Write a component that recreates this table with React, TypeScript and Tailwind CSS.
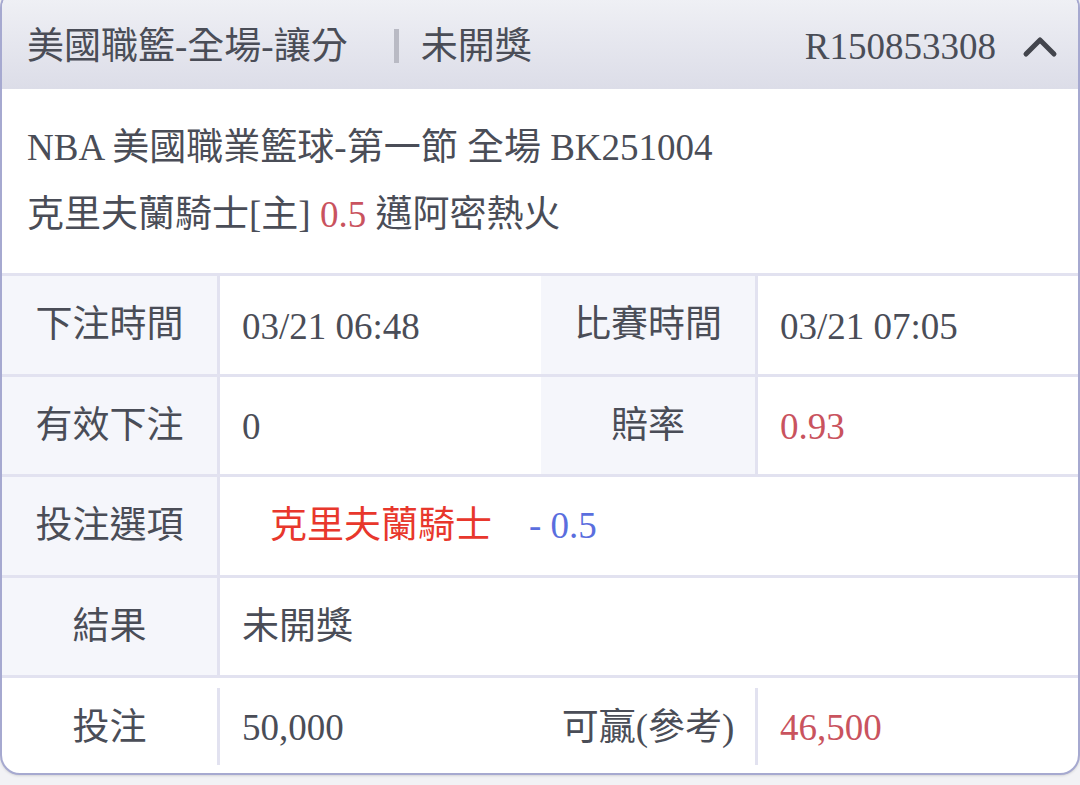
import React from "react";

const FONT = "font-['Liberation_Serif','Noto_Sans_CJK_TC',serif]";

function Chevron() {
  return (
    <svg width="36" height="26" viewBox="0 0 36 26" className="shrink-0">
      <polyline
        points="4,21 18,7 32,21"
        fill="none"
        stroke="#43454d"
        strokeWidth="5"
        strokeLinecap="round"
        strokeLinejoin="round"
      />
    </svg>
  );
}

function Label({ children, plain }: { children: React.ReactNode; plain?: boolean }) {
  return (
    <div
      className={`h-full flex items-center justify-center ${plain ? "" : "bg-[#f5f6fb]"}`}
    >
      {children}
    </div>
  );
}

function VDivider({ short }: { short?: boolean }) {
  if (short) return <div className="w-[3px] h-[77px] mt-[-2px] bg-[#e2e2f0] shrink-0" />;
  return <div className="w-[3px] h-full bg-[#e2e2f0] shrink-0" />;
}

export default function App() {
  return (
    <div className={`min-h-screen h-[785px] overflow-hidden bg-[#f2f2f5] ${FONT} text-[#4a4d57]`}>
      <div className="mt-[-12px] w-[1080px] h-[787px] rounded-[20px] border-2 border-[#a6a9d0] bg-white overflow-hidden flex flex-col shadow-sm">
        {/* header */}
        <div className="h-[99px] shrink-0 pt-[13px] pl-[25px] pr-[20px] flex items-center bg-gradient-to-b from-[#f1f2f6] to-[#dcdde8]">
          <span className="text-[37px] leading-none">美國職籃-全場-讓分</span>
          <span className="ml-[46px] w-[5px] h-[34px] bg-[#b9bac4]" />
          <span className="ml-[22px] text-[37px] leading-none">未開獎</span>
          <span className="ml-auto text-[37px] leading-none">R150853308</span>
          <span className="ml-[26px]">
            <Chevron />
          </span>
        </div>

        {/* match info */}
        <div className="h-[184px] shrink-0 pl-[25px] flex flex-col justify-center text-[37px] leading-[67px]">
          <div>NBA 美國職業籃球-第一節 全場 BK251004</div>
          <div>
            克里夫蘭騎士[主] <span className="text-[#c9535e]">0.5</span> 邁阿密熱火
          </div>
        </div>

        {/* table */}
        <div className="flex flex-col text-[37px] leading-none">
          <div className="h-[100.5px] border-t-[3px] border-[#e2e2f0] flex">
            <div className="w-[215px] shrink-0"><Label>下注時間</Label></div>
            <VDivider />
            <div className="w-[321px] shrink-0 flex items-center pl-[22px] pt-[3px]">03/21 06:48</div>
            <div className="w-[214px] shrink-0"><Label>比賽時間</Label></div>
            <VDivider />
            <div className="flex-1 flex items-center pl-[22px] pt-[3px]">03/21 07:05</div>
          </div>

          <div className="h-[100.5px] border-t-[3px] border-[#e2e2f0] flex">
            <div className="w-[215px] shrink-0"><Label>有效下注</Label></div>
            <VDivider />
            <div className="w-[321px] shrink-0 flex items-center pl-[22px] pt-[3px]">0</div>
            <div className="w-[214px] shrink-0"><Label>賠率</Label></div>
            <VDivider />
            <div className="flex-1 flex items-center pl-[22px] pt-[3px] text-[#c9535e]">0.93</div>
          </div>

          <div className="h-[100.5px] border-t-[3px] border-[#e2e2f0] flex">
            <div className="w-[215px] shrink-0"><Label>投注選項</Label></div>
            <VDivider />
            <div className="flex-1 flex items-center pl-[50px]">
              <span className="text-[#e8372c]">克里夫蘭騎士</span>
              <span className="ml-[37px] text-[#5a6ede]">- 0.5</span>
            </div>
          </div>

          <div className="h-[100.5px] border-t-[3px] border-[#e2e2f0] flex">
            <div className="w-[215px] shrink-0"><Label>結果</Label></div>
            <VDivider />
            <div className="flex-1 flex items-center pl-[22px]">未開獎</div>
          </div>

          <div className="h-[101px] border-t-[3px] border-[#e2e2f0] flex items-center">
            <div className="w-[215px] shrink-0 h-full"><Label plain>投注</Label></div>
            <VDivider short />
            <div className="w-[321px] shrink-0 h-full flex items-center pl-[22px]">50,000</div>
            <div className="w-[214px] shrink-0 h-full"><Label plain>可贏(參考)</Label></div>
            <VDivider short />
            <div className="flex-1 h-full flex items-center pl-[22px] text-[#c9535e]">46,500</div>
          </div>
        </div>
      </div>
    </div>
  );
}
